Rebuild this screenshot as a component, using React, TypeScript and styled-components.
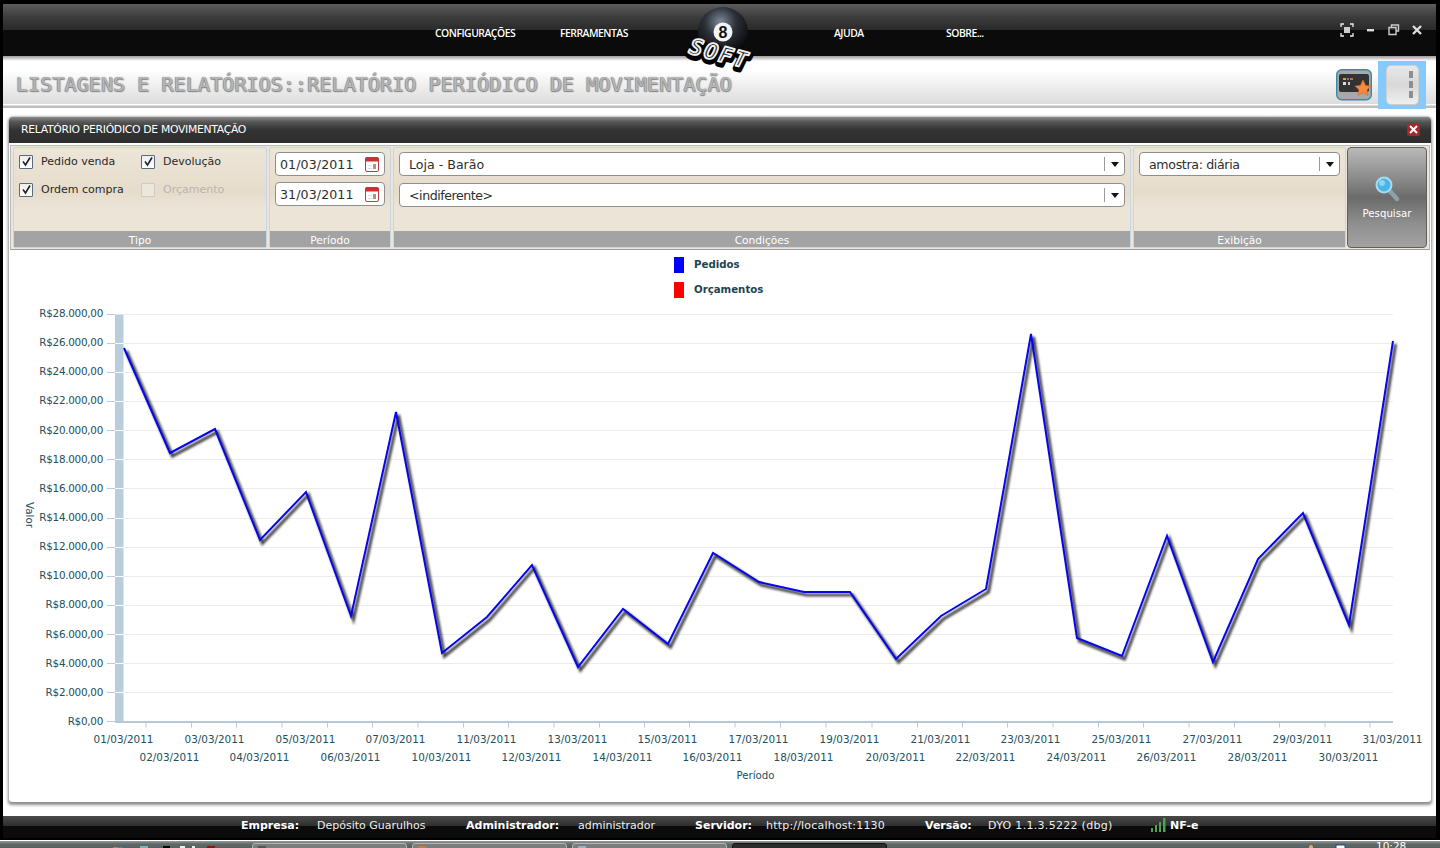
import React from "react";
import styled, { createGlobalStyle } from "styled-components";

const Global = createGlobalStyle`
  html, body { margin: 0; padding: 0; background: #000; overflow: hidden; }
  * { box-sizing: border-box; }
`;

const Page = styled.div`
  width: 1440px; height: 848px; overflow: hidden; position: relative;
  display: flex; flex-direction: column;
  background: #000; padding-top: 4px;
  font-family: "DejaVu Sans", sans-serif;
`;
const Frame = styled.div`
  margin: 0 4px 0 3px; flex: none; height: 834px; display: flex; flex-direction: column; position: relative;
`;
const TopBar = styled.header`
  height: 52px; flex: none; position: relative;
  background: linear-gradient(#5c5c5c 0, #3a3a3a 14px, #2a2a2a 26px, #0b0b0b 26px, #0b0b0b 100%);
  color: #fff;
`;
const Menu = styled.nav`
  position: absolute; top: 22px; left: 0; right: 0; height: 14px;
`;
const MenuItem = styled.span<{ $x: number }>`
  position: absolute; left: ${(p) => p.$x}px; top: 0;
  font: 10.4px/14px "Open Sans", "Liberation Sans", sans-serif; font-weight: 600; letter-spacing: -0.5px; white-space: nowrap;
`;
const WinButtons = styled.div`
  position: absolute; right: 13px; top: 19px; display: flex; gap: 10px; align-items: center;
`;
const Logo = styled.svg`
  position: absolute; left: 680px; top: 2px; z-index: 5; overflow: visible;
`;
const TitleBar = styled.div`
  height: 52px; flex: none; display: flex; align-items: center; padding-left: 13px; position: relative;
  background: linear-gradient(#9a9a9a 0, #d8d8d8 3px, #fff 5px, #fff 14px, #dcdcdc 48px, #fff 48px, #fff 49px, #bdbdbd 50px, #bdbdbd 52px);
`;
const Title = styled.h1`
  margin: 0; font: 400 20.16px/24px "DejaVu Sans Mono", monospace; color: #b6b6b6; white-space: nowrap;
  position: relative; top: 2px;
  text-shadow: -0.5px 0 1px #808080, 0 1px 1px #8a8a8a, 1px 1px 1px #a5a5a5;
`;
const Shortcuts = styled.div`
  margin-left: auto; margin-right: 10px; display: flex; align-items: center; gap: 6px; margin-top: 5px;
`;
const SideToggle = styled.div`
  width: 48px; height: 48px; background: #86c9fb; display: flex; align-items: center; justify-content: center;
`;
const ToggleInner = styled.div`
  width: 33px; height: 40px; border-radius: 5px; background: linear-gradient(#e8e8e8, #d8d8d8 50%, #efefef);
  border: 1px solid #cfcfcf; display: flex; flex-direction: column; align-items: flex-end; justify-content: center; gap: 3px; padding-right: 5px;
`;
const Dash = styled.i`
  width: 4px; height: 7px; background: #8f8f8f; display: block;
`;
const Main = styled.main`
  flex: 1; min-height: 0; background: #fff; padding: 8px 5px 14px 6px; display: flex;
`;
const Panel = styled.section`
  flex: 1; min-width: 0; display: flex; flex-direction: column; border-radius: 4px 4px 3px 3px; background: #fff;
  box-shadow: 0 2px 3px 1px rgba(0,0,0,.45);
`;
const PanelHead = styled.div`
  height: 27px; flex: none; display: flex; align-items: center; justify-content: space-between; padding: 0 11px 2px 12px;
  background: linear-gradient(#8a8a8a 0, #555 5px, #333 13px, #2d2d2d 100%); border-radius: 4px 4px 0 0; border-top: 1px solid #ccc;
  color: #fff; font: 10.8px "DejaVu Sans", sans-serif; letter-spacing: -0.3px;
`;
const CloseBtn = styled.span`
  width: 13px; height: 13px; background: #a5262b; border-radius: 2px; display: flex; align-items: center; justify-content: center;
`;
const FilterBar = styled.div`
  height: 105px; flex: none; margin: 2px 1px 0 1px; display: flex; padding: 1px 3px 1px 2px; gap: 2px;
  background: #ece5d9; border: 1px solid #b9b9b9; border-bottom-color: #9d9d9d;
`;
const Group = styled.div<{ $w: number }>`
  width: ${(p) => p.$w}px; flex: none; display: flex; flex-direction: column; border: 1px solid #c6d5e0; border-radius: 2px;
  background: linear-gradient(#ece5d9 0, #e6dccb 45%, #ebe4d7 60%, #ebe4d7 100%);
`;
const GroupBody = styled.div<{ $gap?: number }>`
  flex: 1; min-height: 0; padding: 4px 5px 0; display: flex; flex-direction: column; gap: ${(p) => p.$gap ?? 6}px;
`;
const Caption = styled.div`
  height: 16px; flex: none; background: #a3a3a3; color: #fff; text-align: center; font-size: 10.6px; line-height: 18px; overflow: hidden;
`;
const CheckGrid = styled.div`
  display: grid; grid-template-columns: 122px auto; grid-auto-rows: 28px; padding: 1px 0 0 0;
`;
const CheckRow = styled.label<{ $off?: boolean }>`
  display: flex; align-items: center; gap: 8px; height: 13px; margin-top: 2px; font-size: 11px; color: ${(p) => (p.$off ? "#b8b5ae" : "#2a2a2a")}; white-space: nowrap;
`;
const Box = styled.span<{ $off?: boolean }>`
  width: 14px; height: 14px; flex: none; border-radius: 1px; display: flex; align-items: center; justify-content: center;
  background: ${(p) => (p.$off ? "#ece7dd" : "linear-gradient(#eee,#fff)")}; border: 1px solid ${(p) => (p.$off ? "#cfcbc2" : "#5a6b80")};
`;
const Field = styled.div<{ $ls?: number }>`
  height: 24px; flex: none; background: #fff; border: 1px solid #8e8e8e; border-radius: 4px; display: flex; align-items: center;
  font-size: 12.6px; color: #2e2e2e; padding-left: 9px; white-space: nowrap; letter-spacing: ${(p) => p.$ls ?? 0}px;
`;
const DateField = styled(Field)`
  padding-left: 4px; letter-spacing: .1px; justify-content: space-between; padding-right: 5px;
`;
const Arrow = styled.span`
  margin-left: auto; width: 20px; height: 14px; border-left: 1px solid #9a9a9a; display: flex; align-items: center; justify-content: center;
  &::after { content: ""; border: 4px solid transparent; border-top: 5px solid #111; border-bottom: 0; }
`;
const SearchBtn = styled.button`
  width: 80px; flex: none; padding: 0 0 1px; border: 1px solid #5f5f5f; border-radius: 4px; color: #fff; font: 10.2px "DejaVu Sans", sans-serif;
  background: linear-gradient(#b9b9b9 0, #8c8c8c 30%, #6b6b6b 50%, #8d8d8d 75%, #a3a3a3 100%);
  display: flex; flex-direction: column; align-items: center; justify-content: center; gap: 7px; margin: 0 0 0 -1px;
`;
const ChartArea = styled.div`
  flex: 1; min-height: 0; position: relative; display: flex; flex-direction: column; align-items: flex-start; padding: 7px 0 0 665px; gap: 9px;
`;
const LegendRow = styled.div`
  display: flex; align-items: center; gap: 10px; height: 16px; flex: none;
`;
const LegendText = styled.span`
  font-size: 10.2px; font-weight: 700; color: #1d4450; margin-bottom: 2px;
`;
const Swatch = styled.i<{ $c: string }>`
  width: 10px; height: 16px; display: block; background: ${(p) => p.$c};
`;
const ChartSvg = styled.svg`
  position: absolute; left: 0; top: 0;
`;
const StatusBar = styled.footer`
  height: 22px; flex: none; display: flex; align-items: center; color: #fff; font-size: 11px; padding: 0 0 4px 238px; white-space: nowrap; position: relative;
  background: linear-gradient(#4a4a4a 0, #2e2e2e 10px, #0b0b0b 10px, #0b0b0b 100%);
`;
const StatusKey = styled.b<{ $l?: number; $r: number; $w?: number }>`
  font-weight: 700; margin-left: ${(p) => p.$l ?? 0}px; margin-right: ${(p) => p.$r}px; flex: none;
  ${(p) => (p.$w ? `width: ${p.$w}px;` : "")}
`;
const StatusVal = styled.span<{ $w: number; $ls?: number }>`
  color: #eee; width: ${(p) => p.$w}px; flex: none; letter-spacing: ${(p) => p.$ls ?? 0}px;
`;
const NfeIcon = styled.svg`
  margin-left: 39px; margin-right: 4px; flex: none;
`;
const Taskbar = styled.div`
  height: 8px; flex: none; border-top: 1px solid #fff; position: absolute; left: 0; right: 0; bottom: 0; display: flex;
  background: linear-gradient(#9a9a9a, #5f6a6a 3px, #59605f);
  padding: 2px 0 0 252px; gap: 5px;
`;
const TaskTab = styled.div<{ $dark?: boolean }>`
  width: 155px; height: 8px; border-radius: 3px 3px 0 0; border: 1px solid ${(p) => (p.$dark ? "#111" : "#b5b5b5")};
  background: ${(p) => (p.$dark ? "#2b2b2b" : "#7c7c7c")};
`;
const TrayIcons = styled.svg`
  position: absolute; left: 0; top: 0;
`;
const Clock = styled.span`
  position: absolute; left: 1376px; top: 0px; font: 10.5px/10px "DejaVu Sans", sans-serif; color: #fff;
`;

const labels = ["01","02","03","04","05","06","07","10","11","12","13","14","15","16","17","18","19","20","21","22","23","24","25","26","27","28","29","30","31"];
const xs = [124,170,215,260,306,351,396,442,487,532,578,623,668,713,759,804,850,896,941,986,1031,1077,1122,1167,1213,1258,1303,1349,1393];
const ys = [348,453,429,540,492,616,412,653,617,565,667,609,644,553,582,592,592,659,616,589,334,638,656,536,662,559,513,625,341];
const ticks = Array.from({ length: 15 }, (_, i) => i);
const money = (i: number) => `R$${i === 0 ? "0" : (i * 2000).toLocaleString("de-DE")},00`;

const Chart = () => {
  const OX = 9;
  const top = 250;
  const h = 552;
  const Y = (i: number) => Math.round(721.5 - i * 29.07 - top - 0.5) + 0.5;
  const X = (x: number) => x - OX;
  return (
    <ChartSvg width={1422} height={h} viewBox={`0 0 1422 ${h}`} fontFamily='"DejaVu Sans", sans-serif'>
      <defs>
        <filter id="sh" x="-5%" y="-5%" width="110%" height="110%"><feGaussianBlur stdDeviation="0.9" /></filter>
      </defs>
      <rect x={X(115)} y={Y(14)} width={8.5} height={Y(0) - Y(14)} fill="#bacddd" />
      {ticks.map((i) => (
        <g key={i}>
          <line x1={X(107)} x2={X(115)} y1={Y(i)} y2={Y(i)} stroke="#b8cbdc" />
          {i > 0 && i < 14 && <line x1={X(115)} x2={X(123.5)} y1={Y(i)} y2={Y(i)} stroke="#fff" />}
          {i > 0 && <line x1={X(124)} x2={X(1393)} y1={Y(i)} y2={Y(i)} stroke="#ececec" />}
          <text x={X(103)} y={725 - i * 29.14 - top} fontSize="10.4" letterSpacing="-0.27" fill="#24505b" textAnchor="end">{money(i)}</text>
        </g>
      ))}
      <line x1={X(115)} x2={X(1393)} y1={Y(0) + 0.5} y2={Y(0) + 0.5} stroke="#b5c8d8" strokeWidth="2" />
      {xs.map((x, i) => (
        <g key={i}>
          {i < xs.length - 1 && <line x1={X((x + xs[i + 1]) / 2 - 1)} x2={X((x + xs[i + 1]) / 2 - 1)} y1={Y(0) + 1} y2={Y(0) + 6} stroke="#b8cbdc" />}
          <text x={X(x) - 0.5} y={i % 2 ? 761 - top : 743 - top} fontSize="10.4" fill="#24505b" textAnchor="middle">{labels[i]}/03/2011</text>
        </g>
      ))}
      <text x={X(755.5)} y={779 - top} fontSize="10.2" fill="#24505b" textAnchor="middle">Período</text>
      <text transform={`translate(${X(26)} ${515 - top}) rotate(90)`} fontSize="10.4" fill="#24505b" textAnchor="middle">Valor</text>
      <polyline points={xs.map((x, i) => `${X(x) + 2.5},${ys[i] - top + 3}`).join(" ")} fill="none" stroke="#2a2a2a" strokeOpacity=".85" strokeWidth="3.2" filter="url(#sh)" />
      <polyline points={xs.map((x, i) => `${X(x)},${ys[i] - top}`).join(" ")} fill="none" stroke="#0505f0" strokeWidth="2" strokeLinejoin="miter" />
    </ChartSvg>
  );
};

const Check = ({ label, off }: { label: string; off?: boolean }) => (
  <CheckRow $off={off}>
    <Box $off={off}>
      {!off && (
        <svg width="11" height="11" viewBox="0 0 11 11"><path d="M2 5.5 L4.5 9 L9 1.5" fill="none" stroke="#222" strokeWidth="1.6" /></svg>
      )}
    </Box>
    {label}
  </CheckRow>
);

const Cal = () => (
  <svg width="14" height="15" viewBox="0 0 14 15">
    <rect x=".5" y=".5" width="13" height="14" rx="1.5" fill="#fff" stroke="#c23b3b" />
    <rect x=".5" y=".5" width="13" height="4" fill="#c93030" />
    <rect x="8" y="7" width="3" height="5" fill="#999" />
    <rect x="3" y="8" width="4" height="1" fill="#ddd" />
    <rect x="3" y="11" width="4" height="1" fill="#ddd" />
  </svg>
);

const logoFont = '"DejaVu Sans Mono", monospace';

export default function App() {
  return (
    <Page>
      <Global />
      <Frame>
        <TopBar>
          <Menu>
            <MenuItem $x={432}>CONFIGURAÇÕES</MenuItem>
            <MenuItem $x={557}>FERRAMENTAS</MenuItem>
            <MenuItem $x={831}>AJUDA</MenuItem>
            <MenuItem $x={943}>SOBRE...</MenuItem>
          </Menu>
          <Logo width="80" height="74" viewBox="0 0 80 74">
            <defs>
              <radialGradient id="ball" cx="45%" cy="30%" r="70%">
                <stop offset="0" stopColor="#7b8a99" />
                <stop offset=".45" stopColor="#2c3038" />
                <stop offset="1" stopColor="#050505" />
              </radialGradient>
            </defs>
            <circle cx="40" cy="26" r="25" fill="url(#ball)" />
            <circle cx="40" cy="26" r="9.5" fill="#f4f4f4" />
            <text x="40" y="31.5" textAnchor="middle" fontFamily='"Liberation Sans", sans-serif' fontWeight="700" fontSize="16" fill="#111">8</text>
            <g transform="translate(5 47) rotate(15)" fontFamily={logoFont} fontStyle="italic" fontWeight="700" fontSize="22" letterSpacing="2" strokeLinejoin="round">
              <text x="1" y="2.5" fill="#000" stroke="#000" strokeWidth="6.5">SOFT</text>
              <text fill="#2a2a2a" stroke="#f2f2f2" strokeWidth="1.8">SOFT</text>
            </g>
          </Logo>
          <WinButtons>
            <svg width="14" height="14" viewBox="0 0 14 14"><path d="M1 4V1h3M10 1h3v3M13 10v3h-3M4 13H1v-3" fill="none" stroke="#eee" strokeWidth="1.3" /><rect x="4" y="4" width="6" height="6" fill="#ccc" /></svg>
            <svg width="13" height="14" viewBox="0 0 13 14"><rect x="3" y="6" width="7" height="2.4" fill="#ddd" /></svg>
            <svg width="14" height="12" viewBox="0 0 14 12"><path d="M4.5 3V1h7v6H9.5M2 3.5h7v7H2z" fill="none" stroke="#ccc" strokeWidth="1.4" /></svg>
            <svg width="12" height="12" viewBox="0 0 12 12"><path d="M2 2l8 8M10 2l-8 8" stroke="#ddd" strokeWidth="2.4" /></svg>
          </WinButtons>
        </TopBar>
        <TitleBar>
          <Title>LISTAGENS E RELATÓRIOS::RELATÓRIO PERIÓDICO DE MOVIMENTAÇÃO</Title>
          <Shortcuts>
            <svg width="36" height="32" viewBox="0 0 36 32">
              <rect x=".7" y=".7" width="34.6" height="30" rx="5" fill="#a8a8a8" stroke="#3f8aa0" strokeWidth="1.4" />
              <rect x="3" y="5" width="30" height="18" rx="2" fill="#333" />
              <rect x="7" y="9" width="3" height="2" fill="#e0a030" /><rect x="11" y="9" width="2" height="2" fill="#3a8fd0" /><rect x="14" y="9" width="3" height="2" fill="#e06030" />
              <rect x="7" y="13" width="3" height="3" fill="#ddd" /><rect x="12" y="13" width="2" height="3" fill="#ccc" />
              <path d="M27 11l2.6 5.4 5.4.7-4 3.7 1 5.6-5-2.8-5 2.8 1-5.6-4-3.7 5.4-.7z" fill="#f58a3c" stroke="#d9642a" strokeWidth=".6" />
            </svg>
            <SideToggle>
              <ToggleInner><Dash /><Dash /><Dash /></ToggleInner>
            </SideToggle>
          </Shortcuts>
        </TitleBar>
        <Main>
          <Panel>
            <PanelHead>
              RELATÓRIO PERIÓDICO DE MOVIMENTAÇÃO
              <CloseBtn>
                <svg width="9" height="9" viewBox="0 0 9 9"><path d="M1 1l7 7M8 1l-7 7" stroke="#fff" strokeWidth="2" /></svg>
              </CloseBtn>
            </PanelHead>
            <FilterBar>
              <Group $w={254}>
                <GroupBody>
                  <CheckGrid>
                    <Check label="Pedido venda" />
                    <Check label="Devolução" />
                    <Check label="Ordem compra" />
                    <Check label="Orçamento" off />
                  </CheckGrid>
                </GroupBody>
                <Caption>Tipo</Caption>
              </Group>
              <Group $w={122}>
                <GroupBody>
                  <DateField>01/03/2011<Cal /></DateField>
                  <DateField>31/03/2011<Cal /></DateField>
                </GroupBody>
                <Caption>Período</Caption>
              </Group>
              <Group $w={738}>
                <GroupBody $gap={7}>
                  <Field>Loja - Barão<Arrow /></Field>
                  <Field $ls={-0.45}>&lt;indiferente&gt;<Arrow /></Field>
                </GroupBody>
                <Caption>Condições</Caption>
              </Group>
              <Group $w={213}>
                <GroupBody>
                  <Field $ls={-0.35}>amostra: diária<Arrow /></Field>
                </GroupBody>
                <Caption>Exibição</Caption>
              </Group>
              <SearchBtn>
                <svg width="26" height="26" viewBox="0 0 26 26">
                  <line x1="15" y1="15" x2="23" y2="24" stroke="#8fa0a8" strokeWidth="4.5" strokeLinecap="round" />
                  <circle cx="10" cy="10" r="7.5" fill="#4db4e6" stroke="#a9dcf2" strokeWidth="2" />
                  <circle cx="8" cy="8" r="3" fill="#8fd4f2" />
                </svg>
                Pesquisar
              </SearchBtn>
            </FilterBar>
            <ChartArea>
              <Chart />
              <LegendRow><Swatch $c="#0000ff" /><LegendText>Pedidos</LegendText></LegendRow>
              <LegendRow><Swatch $c="#ff0000" /><LegendText>Orçamentos</LegendText></LegendRow>
            </ChartArea>
          </Panel>
        </Main>
        <StatusBar>
          <StatusKey $r={18} $w={58}>Empresa:</StatusKey><StatusVal $w={109}>Depósito Guarulhos</StatusVal>
          <StatusKey $l={40} $r={17} $w={95}>Administrador:</StatusKey><StatusVal $w={77}>administrador</StatusVal>
          <StatusKey $l={40} $r={14} $w={57}>Servidor:</StatusKey><StatusVal $w={119} $ls={0.2}>http://localhost:1130</StatusVal>
          <StatusKey $l={40} $r={14} $w={49}>Versão:</StatusKey><StatusVal $w={124} $ls={0.3}>DYO 1.1.3.5222 (dbg)</StatusVal>
          <NfeIcon width="15" height="14" viewBox="0 0 15 14">
            <path d="M0 10h2v4H0zM4 7h2v7H4zM8 4h2v10H8zM12 0h2.5v14H12z" fill="#4fa34f" />
          </NfeIcon>
          <StatusKey $r={0}>NF-e</StatusKey>
        </StatusBar>
      </Frame>
      <Taskbar>
        <TrayIcons width="1440" height="8" viewBox="0 0 1440 8">
          <rect x="113" y="6" width="5" height="2" fill="#d9752e" /><rect x="118" y="6" width="5" height="2" fill="#3a7fc0" />
          <rect x="140" y="5" width="8" height="3" fill="#7fb0c0" />
          <rect x="163" y="5" width="7" height="3" fill="#000" />
          <rect x="180" y="5" width="5" height="3" fill="#eee" /><rect x="192" y="5" width="3" height="3" fill="#eee" />
          <rect x="207" y="5" width="8" height="3" fill="#8a1515" />
          <rect x="258" y="5" width="8" height="3" fill="#555" /><rect x="418" y="5" width="8" height="3" fill="#d9752e" /><rect x="578" y="5" width="8" height="3" fill="#8fb5c8" />
          <circle cx="1311" cy="6" r="2" fill="#e8b050" />
          <rect x="1336" y="4" width="9" height="4" fill="#fff" stroke="#1d4a80" />
        </TrayIcons>
        <TaskTab /><TaskTab /><TaskTab /><TaskTab $dark />
        <Clock>10:28</Clock>
      </Taskbar>
    </Page>
  );
}
